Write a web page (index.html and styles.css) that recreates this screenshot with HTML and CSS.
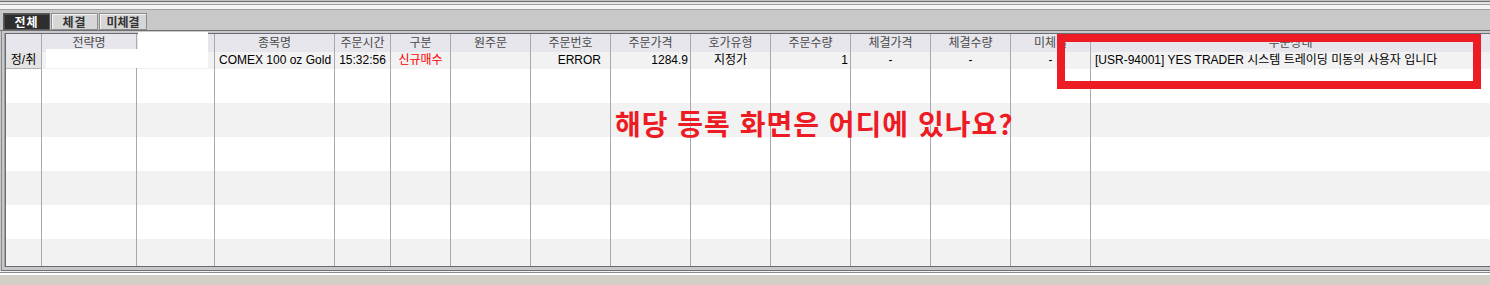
FILE: index.html
```html
<!DOCTYPE html>
<html lang="ko">
    <head>
        <meta charset="utf-8">
        <meta name="viewport" content="width=device-width,initial-scale=1">
        <title>주문내역</title>
        <link rel="stylesheet" href="styles.css">
    </head>
<body>
    <div id="window">
        <div class="frame-top"></div>
        <div class="tab-strip">
            <a class="tab active">전체</a>
            <a class="tab">체결</a>
            <a class="tab wide">미체결</a>
        </div>
        <div class="grid-frame">
            <div class="grid">
                <div class="row head">
                    <div class="cell"></div>
                    <div class="cell">전략명</div>
                    <div class="cell"></div>
                    <div class="cell">종목명</div>
                    <div class="cell">주문시간</div>
                    <div class="cell">구분</div>
                    <div class="cell">원주문</div>
                    <div class="cell">주문번호</div>
                    <div class="cell">주문가격</div>
                    <div class="cell">호가유형</div>
                    <div class="cell">주문수량</div>
                    <div class="cell">체결가격</div>
                    <div class="cell">체결수량</div>
                    <div class="cell">미체결</div>
                    <div class="cell">주문상태</div>
                </div>
                <div class="row first">
                    <div class="cell btn-cell">정/취</div>
                    <div class="cell left">-</div>
                    <div class="cell"></div>
                    <div class="cell left">COMEX 100 oz Gold</div>
                    <div class="cell">15:32:56</div>
                    <div class="cell buy">신규매수</div>
                    <div class="cell"></div>
                    <div class="cell right pad">ERROR</div>
                    <div class="cell right">1284.9</div>
                    <div class="cell">지정가</div>
                    <div class="cell right">1</div>
                    <div class="cell">-</div>
                    <div class="cell">-</div>
                    <div class="cell">-</div>
                    <div class="cell left">[USR-94001] YES TRADER 시스템 트레이딩 미동의 사용자 입니다</div>
                </div>
                <div class="row band"><div class="cell"></div><div class="cell"></div><div class="cell"></div><div class="cell"></div><div class="cell"></div><div class="cell"></div><div class="cell"></div><div class="cell"></div><div class="cell"></div><div class="cell"></div><div class="cell"></div><div class="cell"></div><div class="cell"></div><div class="cell"></div><div class="cell"></div></div>
                <div class="row band"><div class="cell"></div><div class="cell"></div><div class="cell"></div><div class="cell"></div><div class="cell"></div><div class="cell"></div><div class="cell"></div><div class="cell"></div><div class="cell"></div><div class="cell"></div><div class="cell"></div><div class="cell"></div><div class="cell"></div><div class="cell"></div><div class="cell"></div></div>
                <div class="row band"><div class="cell"></div><div class="cell"></div><div class="cell"></div><div class="cell"></div><div class="cell"></div><div class="cell"></div><div class="cell"></div><div class="cell"></div><div class="cell"></div><div class="cell"></div><div class="cell"></div><div class="cell"></div><div class="cell"></div><div class="cell"></div><div class="cell"></div></div>
                <div class="row band"><div class="cell"></div><div class="cell"></div><div class="cell"></div><div class="cell"></div><div class="cell"></div><div class="cell"></div><div class="cell"></div><div class="cell"></div><div class="cell"></div><div class="cell"></div><div class="cell"></div><div class="cell"></div><div class="cell"></div><div class="cell"></div><div class="cell"></div></div>
                <div class="row band"><div class="cell"></div><div class="cell"></div><div class="cell"></div><div class="cell"></div><div class="cell"></div><div class="cell"></div><div class="cell"></div><div class="cell"></div><div class="cell"></div><div class="cell"></div><div class="cell"></div><div class="cell"></div><div class="cell"></div><div class="cell"></div><div class="cell"></div></div>
                <div class="row band"><div class="cell"></div><div class="cell"></div><div class="cell"></div><div class="cell"></div><div class="cell"></div><div class="cell"></div><div class="cell"></div><div class="cell"></div><div class="cell"></div><div class="cell"></div><div class="cell"></div><div class="cell"></div><div class="cell"></div><div class="cell"></div><div class="cell"></div></div>
            </div>
        </div>
        <div class="frame-bottom"></div>

        <div class="mask mask-head"></div>
        <div class="mask mask-name"></div>
        <div class="callout"></div>
        <div class="question">해당 등록 화면은 어디에 있나요?</div>
    </div>
</body>
</html>
```

FILE: styles.css
```css
body {
    margin: 0;
    overflow: hidden;
    background: #d4d0c8;
    font-family: "Liberation Sans", "Noto Sans CJK KR", sans-serif;
    font-size: 12px;
    color: #000;
}

#window {
    position: relative;
    width: 1492px;
    background: #c8c8c8;
}

.frame-top {
    height: 10px;
    background: linear-gradient(to bottom,
        #c0c0c0 0, #c0c0c0 1px,
        #707070 1px, #707070 2px,
        #e4e4e4 2px, #e4e4e4 4px,
        #a0a0a0 4px, #a0a0a0 5px,
        #f4f4f4 5px, #f4f4f4 9px,
        #a0a0a0 9px, #a0a0a0 10px);
}

.tab-strip {
    display: flex;
    gap: 1px;
    height: 21px;
    box-sizing: border-box;
    padding: 3px 0 0 3px;
    border-bottom: 1px solid #707078;
}

.tab {
    display: flex;
    align-items: center;
    justify-content: center;
    width: 47px;
    box-sizing: border-box;
    background: #d6d6d6;
    border: 1px solid #8c8c8c;
    box-shadow: inset 1px 1px #f4f4f4;
    color: #333;
    font-family: "Noto Sans CJK KR", sans-serif;
    font-weight: bold;
    letter-spacing: 1px;
    cursor: pointer;
}

.tab.wide {
    width: 48px;
    letter-spacing: 0;
}

.tab.active {
    background: #2e2e2e;
    border-color: #5a5a5a;
    box-shadow: inset 1px 1px #4a4a4a;
    color: #fff;
}

.grid-frame {
    margin-left: 1px;
    padding: 2px 0 3px 3px;
    border-left: 1px solid #8a8a8a;
    border-bottom: 1px solid #707078;
}

.grid {
    height: 234px;
    box-sizing: border-box;
    overflow: hidden;
    border: 1px solid #6b6b78;
    box-shadow: -1px 0 #a0a0a0;
    background: #fff;
}

.row {
    display: grid;
    grid-template-columns: 36px 95px 78px 120px 56px 60px 80px 80px 80px 80px 80px 80px 80px 80px 1fr;
    height: 34px;
}

.row.head {
    height: 18px;
    background: #e6e6ec;
    color: #4a4a4a;
}

.row.first {
    height: 17px;
    background: #f2f2f2;
}

.row.band:nth-child(2n) {
    background: #f2f2f2;
}

.cell {
    box-sizing: border-box;
    border-right: 1px solid #a8a8b0;
    text-align: center;
    line-height: 17px;
    white-space: nowrap;
    overflow: hidden;
}

.head .cell {
    line-height: 18px;
}

.cell.left {
    text-align: left;
    padding-left: 4px;
}

.cell.right {
    text-align: right;
    padding-right: 2px;
}

.cell.right.pad {
    padding-right: 9px;
}

.cell.buy {
    color: #f00;
}

.btn-cell {
    background: #e4e4e4;
    border-bottom: 1px solid #b4b4b4;
}

.frame-bottom {
    height: 4px;
    background: linear-gradient(to bottom,
        #f0f0f0 0, #f0f0f0 1px,
        #888 1px, #888 2px,
        #fff 2px, #fff 4px);
}

.mask {
    position: absolute;
    background: #fff;
}

.mask-head {
    left: 138px;
    top: 32px;
    width: 70px;
    height: 20px;
}

.mask-name {
    left: 46px;
    top: 49px;
    width: 162px;
    height: 19px;
}

.callout {
    position: absolute;
    left: 1057px;
    top: 34px;
    width: 424px;
    height: 55px;
    box-sizing: border-box;
    border: 8px solid #ed1c24;
}

.question {
    position: absolute;
    left: 615px;
    top: 109px;
    color: #ed1c24;
    font-family: "Noto Sans CJK KR", sans-serif;
    font-weight: bold;
    font-size: 28px;
    line-height: 28px;
    letter-spacing: 1px;
    white-space: nowrap;
}
```
